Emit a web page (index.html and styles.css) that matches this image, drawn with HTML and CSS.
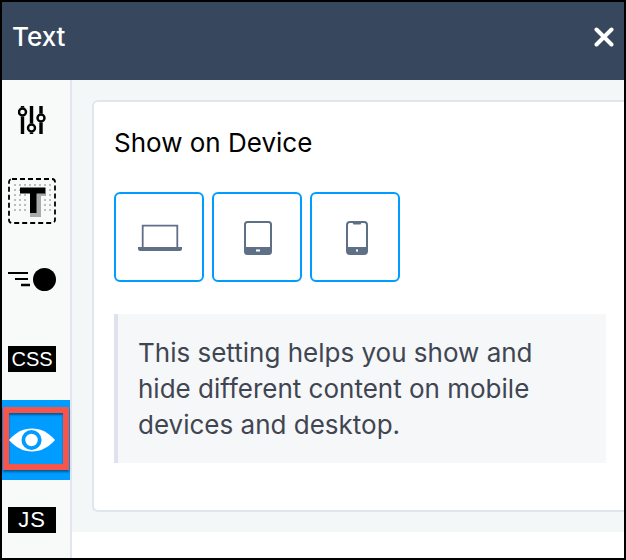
FILE: index.html
```html
<!DOCTYPE html>
<html lang="en">
<head>
<meta charset="utf-8">
<title>Text</title>
<link rel="stylesheet" href="styles.css">
</head>
<body>
<div class="frame">
  <header class="header">
    <span class="title">Text</span>
    <svg class="close" viewBox="0 0 20 20" width="20" height="20"><path d="M2.5 2.5 17.5 17.5M17.5 2.5 2.5 17.5" fill="none" stroke="#fff" stroke-width="4" stroke-linecap="round"/></svg>
  </header>
  <div class="body">
    <nav class="rail">
      <div class="tab tab-sliders">
        <svg viewBox="0 0 28 28" width="28" height="28" fill="none" stroke="#000">
          <path d="M4.500 0v1.500M4.500 10.500V28M13.500 0v17.500M13.500 26.500V28M23 0v7.500M23 16.500V28" stroke-width="3.400"/>
          <circle cx="4.500" cy="6" r="3.500" stroke-width="2.400"/>
          <circle cx="13.500" cy="22" r="3.500" stroke-width="2.400"/>
          <circle cx="23" cy="12" r="3.500" stroke-width="2.400"/>
        </svg>
      </div>
      <div class="tab tab-type">
        <svg viewBox="0 0 48 46" width="48" height="46">
          <defs><pattern id="dots" width="5" height="5" patternUnits="userSpaceOnUse"><rect x="1" y="1" width="2" height="2" fill="#bdbdbd"/></pattern></defs>
          <rect x="4" y="3" width="40" height="30" fill="url(#dots)"/>
          <path d="M11 8h28v10H35v23H21V8z" fill="#f8f9f9"/>
          <path d="M28 15h10v3h-5v21H22v-4h6z" fill="#aaa"/>
          <path d="M12 9.500h25.500v6H28.500V35h-6.500V15.500H12z" fill="#000"/>
          <rect x="1" y="1" width="46" height="44" rx="3" fill="none" stroke="#000" stroke-width="1.800" stroke-dasharray="5 3"/>
        </svg>
      </div>
      <div class="tab tab-motion">
        <svg viewBox="0 0 48 24" width="48" height="24">
          <circle cx="36.500" cy="11.500" r="11.500" fill="#000"/>
          <path d="M0 5h20" stroke="#000" stroke-width="2"/>
          <path d="M7 11h13" stroke="#000" stroke-width="2"/>
          <path d="M13 17h9" stroke="#000" stroke-width="2.500"/>
        </svg>
      </div>
      <div class="tab tab-code"><span class="code-badge">CSS</span></div>
      <div class="tab tab-eye">
        <div class="eye-mark">
          <svg viewBox="0 0 48 24" width="48" height="24">
            <path d="M0 12C7 4 15 0 24 0s17 4 24 12c-7 8-15 12-24 12S7 20 0 12z" fill="#fff"/>
            <circle cx="23.500" cy="12" r="8.500" fill="#fff" stroke="#009cff" stroke-width="4"/>
          </svg>
        </div>
      </div>
      <div class="tab tab-js"><span class="code-badge js">JS</span></div>
    </nav>
    <main class="content">
      <section class="card">
        <h2 class="card-title">Show on Device</h2>
        <div class="devices">
          <button class="device" type="button" aria-label="Desktop">
            <svg viewBox="0 0 44 28" width="44" height="28"><path d="M4.700 23V1.700h34.600V23" fill="none" stroke="#5f7086" stroke-width="1.800"/><path d="M0 23h44v1.500a2.500 2.500 0 0 1-2.500 2.500h-39A2.500 2.500 0 0 1 0 24.500z" fill="#5f7086"/></svg>
          </button>
          <button class="device" type="button" aria-label="Tablet">
            <svg viewBox="0 0 28 34" width="28" height="34"><rect x="1" y="1" width="26" height="32" rx="2.500" fill="none" stroke="#5f7086" stroke-width="2"/><path d="M1 26h26v5a2 2 0 0 1-2 2H3a2 2 0 0 1-2-2z" fill="#5f7086"/><rect x="12" y="28.500" width="4" height="2" fill="#fff"/></svg>
          </button>
          <button class="device device-phone" type="button" aria-label="Mobile">
            <svg viewBox="0 0 22 34" width="22" height="34"><rect x="1" y="1" width="20" height="32" rx="3" fill="none" stroke="#5f7086" stroke-width="2"/><path d="M6 1h10l-1.500 2.500h-7z" fill="#5f7086"/><path d="M1 26h20v4a3 3 0 0 1-3 3H4a3 3 0 0 1-3-3z" fill="#5f7086"/><rect x="10" y="28.500" width="2" height="2" fill="#fff"/></svg>
          </button>
        </div>
        <p class="note">This setting helps you show and hide different content on mobile devices and desktop.</p>
      </section>
    </main>
  </div>
</div>
</body>
</html>
```

FILE: styles.css
```css
* { box-sizing: border-box; }
html, body { margin: 0; padding: 0; background: #fff; }
.frame {
  width: 626px;
  height: 560px;
  border: 2px solid #000;
  display: flex;
  flex-direction: column;
  font-family: Inter, "Liberation Sans", sans-serif;
  overflow: hidden;
}
.header {
  height: 78px;
  flex: none;
  background: #37475e;
  display: flex;
  align-items: center;
  justify-content: space-between;
  padding: 0 10px 9px 10px;
}
.title { color: #fff; font-size: 26px; font-weight: 500; }
.close { display: block; }
.body { flex: 1; display: flex; min-height: 0; }
.rail {
  width: 70px;
  flex: none;
  background: #f8f9f9;
  border-right: 2px solid #e1e5ee;
  display: flex;
  flex-direction: column;
}
.tab { display: flex; align-items: center; justify-content: center; flex: none; padding-right: 8px; }
.tab-sliders { height: 80px; }
.tab-type { height: 82px; }
.tab-motion { height: 76px; }
.tab-code { height: 82px; }
.tab-eye { height: 80px; background: #009cff; padding: 0 0 3px; }
.tab-js { height: 80px; }
.code-badge {
  width: 48px;
  height: 26px;
  background: #000;
  color: #fff;
  font-family: "Liberation Sans", Arial, sans-serif;
  font-size: 20px;
  line-height: 26px;
  text-align: center;
}
.code-badge.js { font-size: 22px; letter-spacing: 1px; }
.eye-mark {
  width: 66px;
  height: 63px;
  border: 6px solid #f7544a;
  padding: 3px 8px 0 0;
  box-shadow: inset 0 2px 2px rgba(0, 40, 80, .55), 0 2px 2px rgba(0, 40, 80, .55);
  display: flex;
  align-items: center;
  justify-content: center;
}
.content {
  flex: 1;
  min-width: 0;
  height: 452px;
  background: #f4f7f8;
  padding: 20px 0 20px 20px;
}
.card {
  height: 412px;
  background: #fff;
  border: 2px solid #e1e5ee;
  border-right: 0;
  border-radius: 6px 0 0 6px;
  padding: 24px 18px 0 20px;
}
.card-title {
  margin: 0;
  font-size: 26px;
  line-height: 34px;
  font-weight: 400;
  color: #000;
}
.devices { display: flex; gap: 8px; margin-top: 32px; }
.device {
  width: 90px;
  height: 90px;
  padding: 2px 0 0 2px;
  background: #fff;
  border: 2px solid #009cff;
  border-radius: 6px;
  display: flex;
  align-items: center;
  justify-content: center;
}
.device-phone { padding-left: 4px; }
.note {
  margin: 32px 0 0;
  padding: 21px 60px 20px 20px;
  background: #f6f7f9;
  border-left: 4px solid #dde2ec;
  color: #3f4652;
  font-size: 26px;
  line-height: 36px;
}
```
